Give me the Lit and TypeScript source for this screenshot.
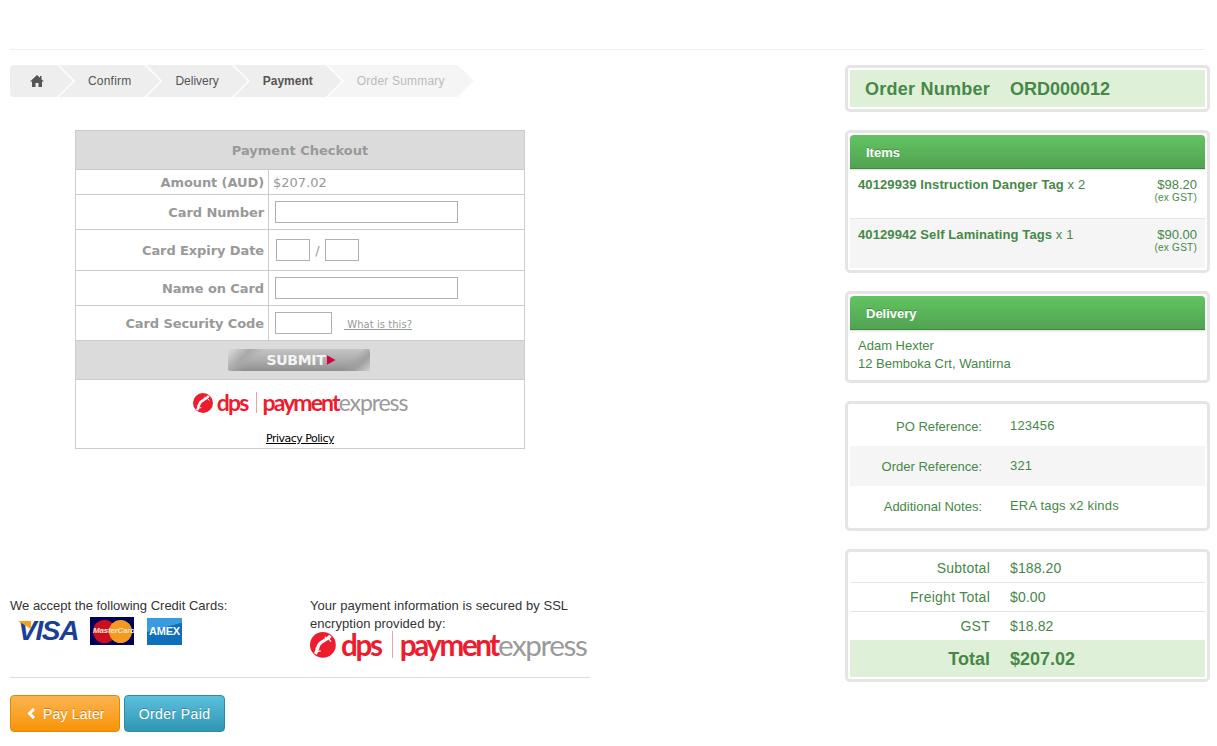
import { LitElement, html, css } from "lit";
import { customElement } from "lit/decorators.js";

const mark = html`<svg class="mark" viewBox="0 0 24 24" aria-hidden="true">
  <circle cx="12" cy="12" r="12" fill="#ed1c2e"/>
  <path d="M19 3.5C16 8 10 8 8 12.5 7 15 6.5 18 5 20.5" fill="none" stroke="#fff" stroke-width="3"/>
  <path d="M14 4.5 15.5 7.5M17.5 6.5 19.5 9M5 15 8 15.5M7.5 18 10 17.5" fill="none" stroke="#fff" stroke-width="1.1"/>
</svg>`;

const logo = (cls: string) => html`<div class="logo ${cls}">
  ${mark}<span class="dps">dps</span><i class="sep"></i><span class="pay">payment</span><span class="exp">express</span>
</div>`;

@customElement("app-root")
export class AppRoot extends LitElement {
  static styles = css`
    :host { display: block; height: 746px; font-family: "Liberation Sans", Arial, sans-serif; font-size: 13px; color: #333; background: #fff; overflow: hidden; }
    .rule { margin: 0 12px 0 10px; height: 49px; border-bottom: 1px solid #eee; }
    .page { display: flex; padding: 15px 0 0 10px; }
    .left { width: 580px; }
    .right { width: 365px; margin-left: 255px; display: flex; flex-direction: column; gap: 18px; }

    .crumbs { display: inline-flex; height: 32px; border-radius: 4px; overflow: hidden; font-size: 12px; }
    .crumb { display: flex; align-items: center; padding: 0 29px; margin-left: -14px; background: #eee; color: #555; letter-spacing: 0;
      clip-path: polygon(0 0, calc(100% - 16px) 0, 100% 50%, calc(100% - 16px) 100%, 0 100%, 16px 50%); }
    .crumb.home { margin-left: 0; padding-left: 20px; clip-path: polygon(0 0, calc(100% - 16px) 0, 100% 50%, calc(100% - 16px) 100%, 0 100%); }
    .crumb.home svg { width: 14px; height: 12px; fill: #555; display: block; }
    .crumb.wide { letter-spacing: .2px; }
    .crumb.on { font-weight: 700; }
    .crumb.off { background: #f5f5f5; color: #bbb; letter-spacing: .2px; }

    table.pay { width: 449px; margin: 33px 0 148px 65px; border-collapse: collapse; table-layout: fixed; font-family: "DejaVu Sans", Verdana, sans-serif; font-size: 13px; color: #999; }
    .c1 { width: 193px; } .c2 { width: 256px; }
    .pay td { border: 1px solid #ccc; padding: 0; box-sizing: border-box; }
    .pay .lab { text-align: right; padding: 1px 4px 0 0; font-weight: 700; letter-spacing: -.1px; }
    .pay .val { padding-left: 6px; }
    .pay .val.amt { padding: 1px 0 0 4px; }
    .pay .head { background: #dbdbdb; text-align: center; font-weight: 700; padding-top: 1px; }
    .pay .head.sub { padding: 0 3px 0 0; }
    .h39 { height: 39px; } .h25 { height: 25px; } .h35 { height: 35px; } .h41 { height: 41px; } .h69 { height: 69px; }
    .field { display: flex; align-items: center; }
    .pay input { box-sizing: border-box; height: 22px; border: 1px solid #b0b0b0; background: #fff; padding: 0; margin: 0; display: block; }
    .w183 { width: 183px; } .w34 { width: 34px; } .w34.first { margin-left: 1px; } .w57 { width: 57px; }
    .slash { width: 15px; text-align: center; }
    .what { margin-left: 12px; font-size: 10px; letter-spacing: .05px; color: #999; text-decoration: underline; white-space: pre; padding-top: 2px; }
    .submit { box-sizing: border-box; width: 142px; height: 22px; margin: 0 auto; padding: 0 0 0 5px; border: 0; border-radius: 2px; display: flex; align-items: center; justify-content: center; gap: 1px;
      font-family: inherit; font-size: 14px; font-weight: 700; letter-spacing: -.3px; color: #f4f4f4;
      background: linear-gradient(135deg, #ddd 0, #a9a9a9 14%, transparent 22%), linear-gradient(315deg, #d0d0d0 0, #a0a0a0 10%, transparent 18%), linear-gradient(#c4c4c4, #a8a8a8 60%, #8f8f8f); }
    .tri { width: 9px; height: 10px; background: #d0043c; clip-path: polygon(0 0, 100% 50%, 0 100%); }
    .brand { text-align: center; vertical-align: top; }
    .brand .logo { justify-content: center; margin-top: 11px; }
    .privacy { margin-top: 18px; font-size: 11px; line-height: 14px; font-family: "DejaVu Sans", sans-serif; letter-spacing: -.5px; color: #000; text-decoration: underline; }

    .logo { display: flex; align-items: center; font-family: "Lato", sans-serif; font-weight: 700; line-height: 1; white-space: nowrap; color: #ed1c2e; --u: 1px; }
    .logo .mark { width: calc(var(--u) * 20); height: calc(var(--u) * 20); flex: none; }
    .logo span { font-size: calc(var(--u) * 23); letter-spacing: calc(var(--u) * -1.9); }
    .logo .dps { margin-left: calc(var(--u) * 4); letter-spacing: calc(var(--u) * -1.8); }
    .logo .sep { width: 1px; height: calc(var(--u) * 21); margin: 0 calc(var(--u) * 5.5) 0 calc(var(--u) * 8.5); background: #f0a0a6; }
    .logo .exp { color: #9a9a9a; font-weight: 400; letter-spacing: calc(var(--u) * -1.1); }
    .logo.big { --u: 1.29px; margin-top: -3px; }

    .accept { display: flex; height: 63px; }
    .accept > div { width: 300px; line-height: 18px; }
    .accept > div + div { width: 280px; letter-spacing: .05px; }
    .cards { display: flex; align-items: center; height: 30px; margin: 1px 0 0 8px; }
    .visa { width: 60px; font: italic 700 28px/1 "Liberation Sans", sans-serif; letter-spacing: -1.3px; color: #1a3f95; position: relative; }
    .visa::before { content: ""; position: absolute; left: 0; top: 4px; width: 13px; height: 8px; background: #f2a21d; clip-path: polygon(0 0, 100% 0, 100% 100%); }
    .mc { width: 44px; height: 28px; margin-left: 12px; background: #00005c; position: relative; overflow: hidden; }
    .mc::before, .mc::after { content: ""; position: absolute; top: 3px; width: 23px; height: 23px; border-radius: 50%; }
    .mc::before { left: 3px; background: #cc0f1f; }
    .mc::after { right: 2px; background: #f39a1f; }
    .mc span { position: absolute; z-index: 1; left: 3px; top: 9px; font: italic 700 8px/10px "Liberation Sans", sans-serif; color: #f4e4d0; letter-spacing: -.2px; white-space: nowrap; }
    .amex { box-sizing: border-box; width: 35px; height: 27px; margin-left: 13px; background: linear-gradient(165deg, #3a9be0 0 38%, #0f6fbb 39%); color: #fff; font: 700 11px/26px "Liberation Sans", sans-serif; text-align: center; letter-spacing: -.2px; }
    .divider { height: 1px; background: #ddd; margin: 17px 0; }
    .btns { display: flex; gap: 4px; }
    .btn { box-sizing: border-box; height: 37px; border-radius: 4px; display: flex; align-items: center; gap: 7px; font-size: 14px; color: #fff; text-shadow: 0 -1px 0 rgba(0,0,0,.25); letter-spacing: .2px; }
    .btn svg { width: 9px; height: 11px; fill: none; stroke: #fff; stroke-width: 3; }
    .orange { padding: 0 14px 0 16px; background: linear-gradient(#fbb450, #f89406); border: 1px solid #e0880f; }
    .blue { padding: 0 14px; letter-spacing: .4px; background: linear-gradient(#5bc0de, #2f96b4); border: 1px solid #2f8aa6; }

    .panel { border: 3px solid #e5e5e5; border-radius: 5px; padding: 2px; color: #468847; background: #fff; }
    .order { box-sizing: border-box; display: flex; height: 37px; padding-top: 1px; align-items: center; background: #dff0d8; font-size: 18px; font-weight: 700; }
    .order b:first-child { width: 160px; padding-left: 15px; box-sizing: border-box; letter-spacing: .25px; }
    .bar { box-sizing: border-box; height: 34px; padding: 1px 16px 0; display: flex; align-items: center; border-radius: 4px 4px 0 0; border-bottom: 1px solid #3f8a3f; background: linear-gradient(#62c462, #51a351); color: #fff; font-size: 13px; font-weight: 700; text-shadow: 0 -1px 0 rgba(0,0,0,.25); box-shadow: 0 1px 2px rgba(0,0,0,.15); }
    .item { box-sizing: border-box; display: flex; justify-content: space-between; padding: 7px 8px 0; height: 50px; border-bottom: 1px solid #e5e5e5; line-height: 18px; letter-spacing: .1px; }
    .item + .item { height: 49px; border: 0; background: #f5f5f5; }
    .price { text-align: right; letter-spacing: 0; }
    .price small { display: block; margin-top: -1px; font-size: 10px; line-height: 9px; letter-spacing: .25px; }
    .addr { padding: 7px 8px 6px; height: 48px; box-sizing: border-box; line-height: 18px; }
    .ref { box-sizing: border-box; display: flex; align-items: center; height: 40px; padding-bottom: 2px; letter-spacing: .2px; }
    .ref.alt { background: #f5f5f5; }
    .ref span { width: 132px; text-align: right; margin-right: 28px; padding-top: 2px; letter-spacing: 0; }
    .tot { box-sizing: border-box; display: flex; align-items: center; height: 29px; font-size: 14px; letter-spacing: .1px; border-bottom: 1px solid #e5e5e5; }
    .tot.last { height: 28px; border: 0; }
    .tot span { width: 140px; text-align: right; margin-right: 20px; letter-spacing: .25px; }
    .tot.grand { height: 37px; padding-top: 1px; border: 0; font-size: 18px; font-weight: 700; letter-spacing: 0; background: #dff0d8; }
    .tot.grand span { letter-spacing: 0; }
  `;

  render() {
    return html`
      <div class="rule"></div>
      <div class="page">
        <div class="left">
          <nav class="crumbs">
            <div class="crumb home"><svg viewBox="0 0 14 12"><path d="M7 0 0 6.5h2V12h3.5V8h3v4H12V6.5h2L11.5 4.2V1H10v1.8Z"/></svg></div>
            <div class="crumb wide">Confirm</div>
            <div class="crumb">Delivery</div>
            <div class="crumb on">Payment</div>
            <div class="crumb off">Order Summary</div>
          </nav>
          <table class="pay">
            <colgroup><col class="c1"><col class="c2"></colgroup>
            <tr><td class="head h39" colspan="2">Payment Checkout</td></tr>
            <tr><td class="lab h25">Amount (AUD)</td><td class="val amt">$207.02</td></tr>
            <tr><td class="lab h35">Card Number</td><td class="val"><input class="w183" aria-label="Card Number"></td></tr>
            <tr><td class="lab h41">Card Expiry Date</td><td class="val"><div class="field"><input class="w34 first" aria-label="Month"><span class="slash">/</span><input class="w34" aria-label="Year"></div></td></tr>
            <tr><td class="lab h35">Name on Card</td><td class="val"><input class="w183" aria-label="Name on Card"></td></tr>
            <tr><td class="lab h35">Card Security Code</td><td class="val"><div class="field"><input class="w57" aria-label="Card Security Code"><span class="what"> What is this?</span></div></td></tr>
            <tr><td class="head sub h39" colspan="2"><button class="submit">SUBMIT<i class="tri"></i></button></td></tr>
            <tr><td class="brand h69" colspan="2">${logo("small")}<div class="privacy">Privacy Policy</div></td></tr>
          </table>
          <div class="accept">
            <div>We accept the following Credit Cards:
              <div class="cards">
                <div class="visa">VISA</div>
                <div class="mc"><span>MasterCard</span></div>
                <div class="amex">AMEX</div>
              </div>
            </div>
            <div>Your payment information is secured by SSL encryption provided by:${logo("big")}</div>
          </div>
          <div class="divider"></div>
          <div class="btns">
            <div class="btn orange"><svg viewBox="0 0 9 11"><path d="M7 1 2.5 5.5 7 10"/></svg>Pay Later</div>
            <div class="btn blue">Order Paid</div>
          </div>
        </div>
        <div class="right">
          <section class="panel"><div class="order"><b>Order Number</b><b>ORD000012</b></div></section>
          <section class="panel">
            <div class="bar">Items</div>
            <div class="item"><div><b>40129939 Instruction Danger Tag</b> x 2</div><div class="price">$98.20<small>(ex GST)</small></div></div>
            <div class="item"><div><b>40129942 Self Laminating Tags</b> x 1</div><div class="price">$90.00<small>(ex GST)</small></div></div>
          </section>
          <section class="panel">
            <div class="bar">Delivery</div>
            <div class="addr">Adam Hexter<br>12 Bemboka Crt, Wantirna</div>
          </section>
          <section class="panel">
            <div class="ref"><span>PO Reference:</span>123456</div>
            <div class="ref alt"><span>Order Reference:</span>321</div>
            <div class="ref"><span>Additional Notes:</span>ERA tags x2 kinds</div>
          </section>
          <section class="panel">
            <div class="tot"><span>Subtotal</span>$188.20</div>
            <div class="tot"><span>Freight Total</span>$0.00</div>
            <div class="tot last"><span>GST</span>$18.82</div>
            <div class="tot grand"><span>Total</span>$207.02</div>
          </section>
        </div>
      </div>
    `;
  }
}
